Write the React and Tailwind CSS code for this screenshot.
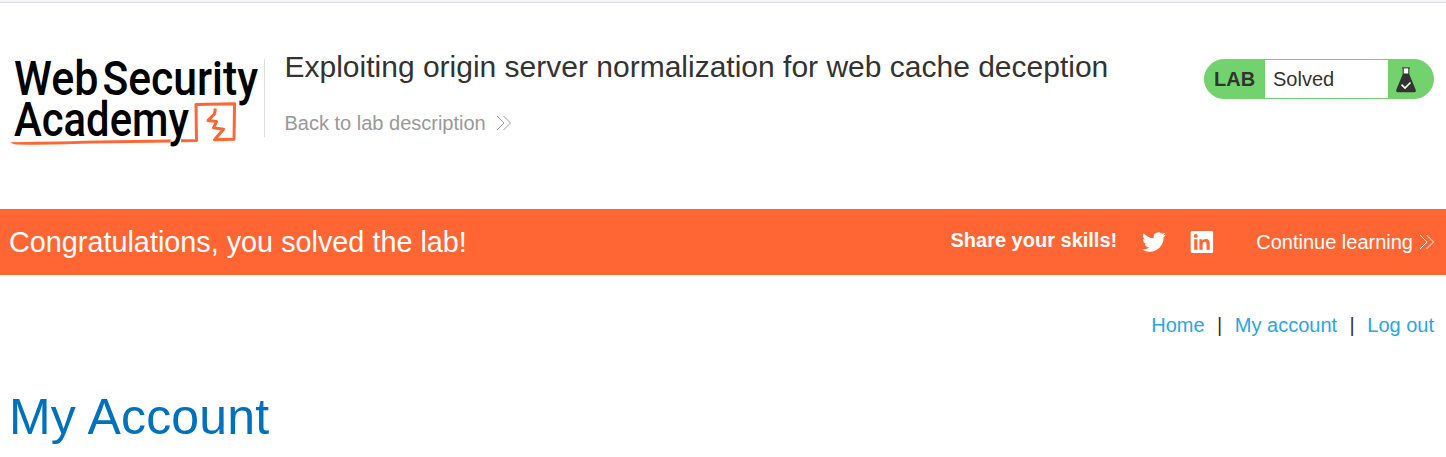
function Chevrons({ className }) {
  return (
    <svg className={className} width="16" height="16" viewBox="0 0 16 16" fill="none" stroke="currentColor" strokeWidth="1">
      <path d="M1 1 L8 8 L1 15 M7.5 1 L14.5 8 L7.5 15" />
    </svg>
  );
}

function Logo() {
  return (
    <svg className="shrink-0" width="253" height="110" viewBox="9 45 253 110">
      <path fill="none" stroke="#ff6633" strokeWidth="3" strokeLinejoin="round" d="M181 140.8 L196.5 140.6 L196 104.5 L234.6 103.8 L234 139.2 L214.5 139.8 L223.5 129.2 L213.5 127.8 L216.5 121.6 L208 120.4 L214.5 114 L215.3 108.5" />
      <path fill="#ff6633" d="M10 142.2 Q40 142 100 140.6 L171 139.4 L170 142.4 L90 143.6 Q30 145.4 14 144.2 Z" />
      <g fill="#000" fontFamily="Roboto, 'Liberation Sans', sans-serif" fontWeight="500" fontSize="48">
        <text x="14" y="95" textLength="84.5" lengthAdjust="spacingAndGlyphs">Web</text>
        <text x="102.5" y="95" textLength="155.5" lengthAdjust="spacingAndGlyphs">Security</text>
        <text x="14" y="136" textLength="175" lengthAdjust="spacingAndGlyphs">Academy</text>
      </g>
    </svg>
  );
}

function Header() {
  return (
    <header className="flex h-[206px] items-start pl-[9px] pr-3">
      <div className="mt-[42px]"><Logo /></div>
      <div className="ml-0.5 mt-14 h-[78px] w-px bg-[#dddddd]" />
      <div className="ml-[19.5px] mt-[46px] grow">
        <h2 className="text-[30px] leading-9 text-[#333332]">Exploiting origin server normalization for web cache deception</h2>
        <a className="mt-[26px] flex items-center text-xl leading-6 text-[#999999]">
          Back to lab description
          <Chevrons className="ml-2.5" />
        </a>
      </div>
      <div className="mt-14 flex h-10 w-[230px] items-stretch overflow-hidden rounded-[20px] border border-[#72d36e] bg-[#72d36e] text-xl text-[#333332]">
        <span className="flex w-[60px] items-center pl-[9px] font-bold">LAB</span>
        <span className="flex w-[123px] items-center bg-white pl-2">Solved</span>
        <svg className="ml-2 mt-[7px]" width="20" height="26" viewBox="0 0 20 26">
          <path fill="#fff" d="M7.5 1H12.5V7H7.5Z" />
          <path fill="none" stroke="#333332" strokeWidth="1" d="M6 .9H14M7.2 1V7M12.8 1V7" />
          <path fill="#333332" d="M7 6.5H13L19.6 22.5Q20.5 25.3 18 25.3H2Q-.5 25.3 .4 22.5Z" />
          <path fill="none" stroke="#fff" strokeWidth="1.7" d="M5.5 17.7L9 21L14.5 15.5" />
        </svg>
      </div>
    </header>
  );
}

function Banner() {
  return (
    <section className="flex h-[66px] items-center bg-[#ff6633] pl-[9px] pr-[11px] text-xl text-white">
      <h4 className="grow text-[28.8px] leading-9">Congratulations, you solved the lab!</h4>
      <span className="-mt-1 font-bold">Share your skills!</span>
      <svg className="ml-[25px]" width="24" height="24" viewBox="0 0 24 24" fill="currentColor">
        <path d="M23.953 4.57a10 10 0 01-2.825.775 4.958 4.958 0 002.163-2.723c-.951.555-2.005.959-3.127 1.184a4.92 4.92 0 00-8.384 4.482C7.69 8.095 4.067 6.13 1.64 3.162a4.822 4.822 0 00-.666 2.475c0 1.71.87 3.213 2.188 4.096a4.904 4.904 0 01-2.228-.616v.06a4.923 4.923 0 003.946 4.827 4.996 4.996 0 01-2.212.085 4.936 4.936 0 004.604 3.417 9.867 9.867 0 01-6.102 2.105c-.39 0-.779-.023-1.17-.067a13.995 13.995 0 007.557 2.209c9.053 0 13.998-7.496 13.998-13.985 0-.21 0-.42-.015-.63A9.935 9.935 0 0024 4.59z" />
      </svg>
      <svg className="ml-6" width="24" height="24" viewBox="0 0 24 24">
        <rect x=".7" y=".9" width="22.4" height="22.2" rx="1.5" fill="#fff" />
        <g fill="#ff6633">
          <circle cx="5.8" cy="6" r="1.9" />
          <path d="M4.2 9.3H7.4V19.7H4.2ZM9.4 9.3H12.4V10.8C13 9.7 14.2 9 15.7 9C18.9 9 19.7 11 19.7 14V19.7H16.5V14.6C16.5 12.8 16.3 11.7 14.8 11.7C13.1 11.7 12.6 12.9 12.6 14.6V19.7H9.4Z" />
        </g>
      </svg>
      <a className="ml-[42px] flex items-center">
        Continue learning
        <Chevrons className="ml-1.5" />
      </a>
    </section>
  );
}

export default function App() {
  return (
    <div className="h-[457px] overflow-hidden bg-white font-['Liberation_Sans',Arial,sans-serif]">
      <div className="h-[3px] border-b border-[#dadce0] bg-[#f4f5f7]" />
      <Header />
      <Banner />
      <nav className="mt-[38px] flex justify-end pr-3 text-xl leading-6 text-[#29a7e4]">
        <a>Home</a>
        <span className="mx-[12.5px] text-[#333332]">|</span>
        <a>My account</a>
        <span className="mx-[12.5px] text-[#333332]">|</span>
        <a>Log out</a>
      </nav>
      <h1 className="ml-[9px] mt-[50px] text-[50px] leading-[60px] tracking-[0.2px] text-[#0071bc]">My Account</h1>
    </div>
  );
}
